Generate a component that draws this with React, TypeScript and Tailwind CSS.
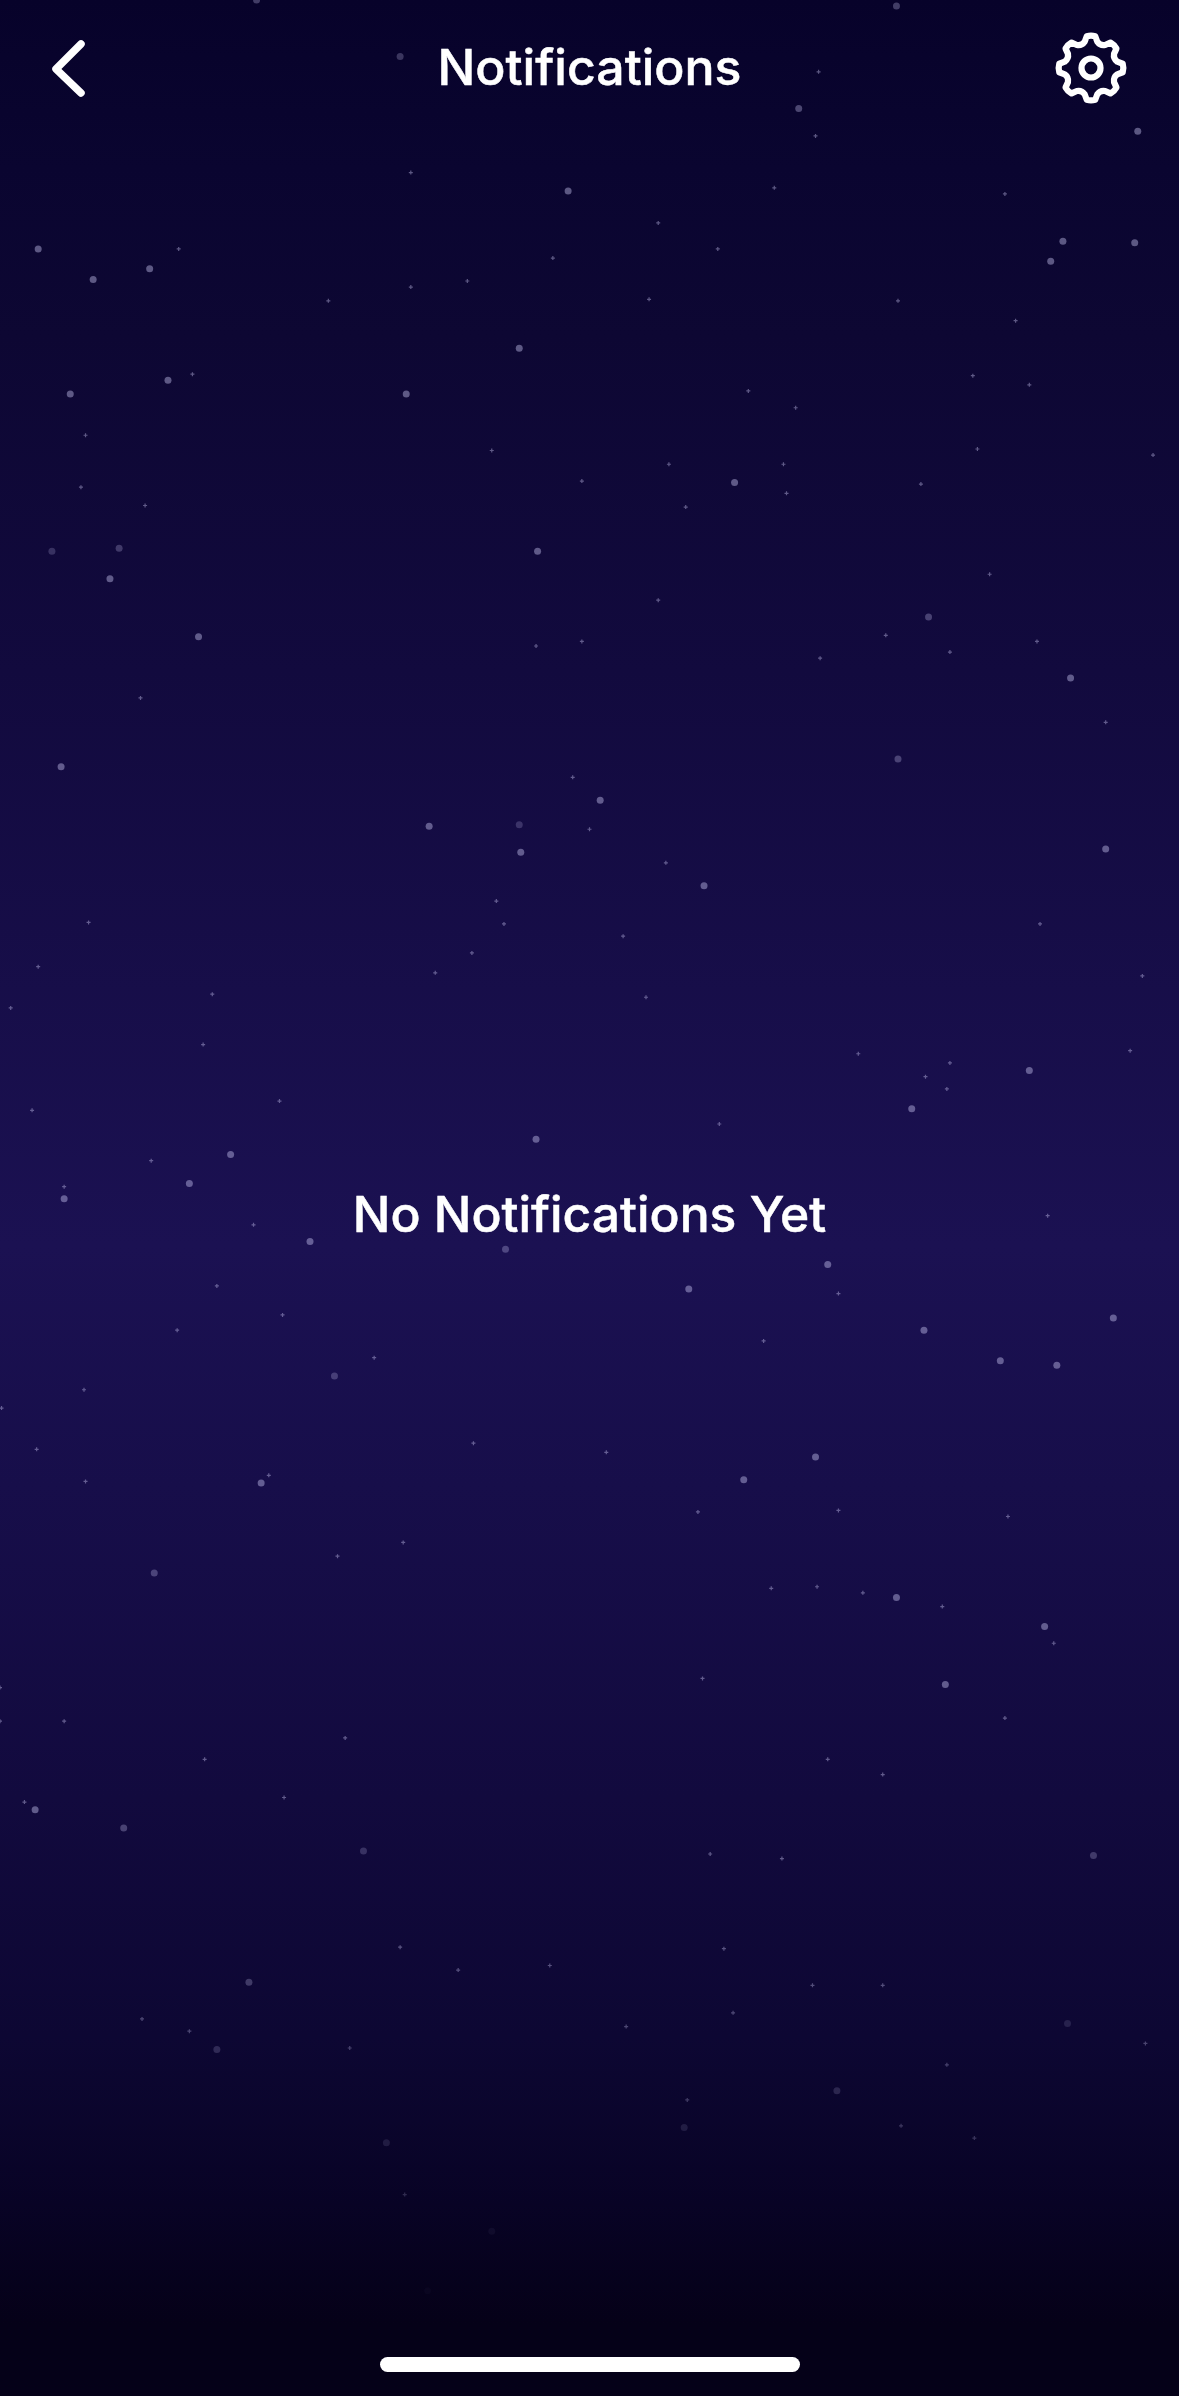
const BIG: [number, number, number?][] = [
  [372,125],[25,163],[61,183],[98,176],[688,171],[696,158],[743,159],[745,86],[340,228],[46,258],[110,249],[266,258],[481,316],[352,361],[78,359,0.6],[72,379],[34,361,0.5],[130,417],[608,404,0.7],[701,444],[40,502],[588,497,0.7],[393,524],[281,541],[341,558],[340,540,0.5],[461,580],[724,556],[674,701],[597,726],[351,746],[151,756],[124,775],[42,785],[203,813],[331,818,0.7],[542,828],[451,844],[605,871],[655,891],[692,894],[729,863],[219,901,0.6],[534,954],[487,969],[171,971],[101,1030,0.7],[587,1046],[684,1065],[619,1103],[23,1185],[81,1197,0.7],[238,1212,0.5],[716,1215,0.6],[163,1298,0.7],[142,1342,0.6],[548,1369,0.6],[699,1325,0.4],[448,1393,0.5],[253,1403,0.5],[322,1461,0.3],[280,1500,0.2],[262,37,0.6],[523,71,0.8],[587,4,0.7],[168,0,0.7],
];
const SMALL: [number, number][] = [
  [269,113],[534,89],[536,47],[507,123],[658,127],[431,146],[470,163],[362,169],[117,163],[306,184],[269,188],[215,197],[425,196],[588,197],[665,210],[126,245],[56,285],[53,319],[95,331],[322,295],[381,315],[438,304],[449,332],[513,304],[515,323],[603,317],[640,294],[755,298],[674,252],[637,246],[490,256],[521,267],[648,376],[431,393],[381,420],[351,423],[537,431],[580,416],[622,427],[679,420],[724,473],[92,457],[375,509],[386,543],[436,565],[325,590],[330,605],[408,613],[58,604],[285,637],[309,624],[681,605],[748,639],[25,633],[7,660],[139,651],[423,653],[133,684],[562,690],[622,696],[606,705],[620,713],[740,688],[183,721],[21,727],[471,736],[99,760],[42,777],[166,802],[686,796],[142,842],[116,871],[185,861],[549,847],[500,878],[245,889],[55,910],[1,922],[24,949],[310,945],[397,951],[56,970],[176,966],[457,990],[549,989],[660,993],[221,1019],[264,1010],[505,1040],[535,1039],[565,1043],[617,1052],[690,1076],[460,1099],[0,1105],[0,1127],[42,1127],[226,1138],[134,1152],[658,1125],[542,1152],[578,1162],[16,1180],[186,1177],[465,1214],[512,1217],[262,1275],[474,1276],[532,1300],[578,1300],[360,1287],[300,1290],[93,1322],[124,1330],[229,1341],[410,1327],[480,1318],[620,1352],[750,1338],[450,1375],[590,1392],[265,1437],[638,1400],
];
const S = 1179 / 772;

function fade(y: number) {
  if (y < 1250) return 1;
  return Math.max(0.25, 1 - (y - 1250) / 350);
}

function Stars() {
  return (
    <svg className="absolute inset-0" width="1179" height="2396" viewBox="0 0 1179 2396" aria-hidden="true">
      {BIG.map(([x, y, o], i) => (
        <circle key={i} cx={x * S} cy={y * S} r={3.5} fill="#d8d4ff" opacity={0.4 * (o ?? 1) * fade(y)} />
      ))}
      {SMALL.map(([x, y], i) => {
        const cx = x * S;
        const cy = y * S;
        return (
          <path
            key={i}
            d={`M${cx - 2} ${cy}H${cx + 2}M${cx} ${cy - 2}V${cy + 2}`}
            stroke="#d8d4ff"
            strokeWidth={1.2}
            opacity={0.4 * fade(y)}
          />
        );
      })}
    </svg>
  );
}

function Gear() {
  const teeth = 8;
  const step = (2 * Math.PI) / teeth;
  const p = (r: number, t: number) => `${(40 + r * Math.cos(t)).toFixed(2)} ${(40 + r * Math.sin(t)).toFixed(2)}`;
  const pts: string[] = [];
  for (let i = 0; i < teeth; i++) {
    const a = i * step - Math.PI / 2;
    pts.push(`${i === 0 ? "M" : "L"}${p(32, a - step * 0.17)}`);
    pts.push(`Q${p(33, a)} ${p(32, a + step * 0.17)}`);
    pts.push(`L${p(27, a + step * 0.3)}`);
    pts.push(`Q${p(24, a + step * 0.5)} ${p(27, a + step * 0.7)}`);
  }
  return (
    <svg width="80" height="80" viewBox="0 0 80 80" fill="none" stroke="#ffffff" strokeWidth="6.2" strokeLinejoin="round" strokeLinecap="round">
      <path d={pts.join(" ") + "Z"} />
      <circle cx="40" cy="40" r="9.5" />
    </svg>
  );
}

export default function App() {
  return (
    <div className="relative flex h-[2396px] w-[1179px] flex-col overflow-hidden bg-[linear-gradient(180deg,#07022a_0%,#0a0530_7%,#0d0733_14%,#120a3e_28%,#1b1152_52%,#170e4a_62%,#120a3e_75%,#0d0733_85%,#080325_92%,#050118_97%,#050118_100%)] font-['Inter',sans-serif] text-white">
      <Stars />
      <header className="relative flex h-[136px] items-center justify-between pl-[48px] pr-[48px]">
        <svg width="38" height="60" viewBox="0 0 38 60" fill="none" stroke="#ffffff" strokeWidth="7.5" strokeLinecap="round" strokeLinejoin="round">
          <path d="M33 6 L8 31 L33 55" />
        </svg>
        <h1 className="absolute left-0 right-0 top-[36px] text-center text-[50px] font-medium leading-[62px] [-webkit-text-stroke:0.5px_white]">Notifications</h1>
        <Gear />
      </header>
      <main className="relative flex flex-1 items-center justify-center pb-[65px]">
        <p className="text-[49.8px] font-medium leading-[62px] [-webkit-text-stroke:0.5px_white]">No Notifications Yet</p>
      </main>
      <div className="relative flex justify-center pb-[24px]">
        <div className="h-[15px] w-[420px] rounded-full bg-white" />
      </div>
    </div>
  );
}
